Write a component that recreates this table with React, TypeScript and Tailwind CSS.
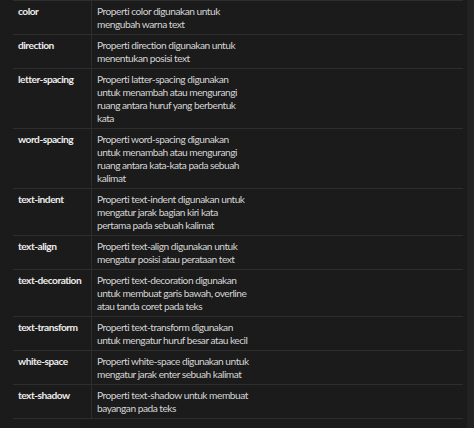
const rows: { name: string; lines: string[] }[] = [
  { name: 'color', lines: ['Properti color digunakan untuk', 'mengubah warna text'] },
  { name: 'direction', lines: ['Properti direction digunakan untuk', 'menentukan posisi text'] },
  {
    name: 'letter-spacing',
    lines: ['Properti latter-spacing digunakan', 'untuk menambah atau mengurangi', 'ruang antara huruf yang berbentuk', 'kata'],
  },
  {
    name: 'word-spacing',
    lines: ['Properti word-spacing digunakan', 'untuk menambah atau mengurangi', 'ruang antara kata-kata pada sebuah', 'kalimat'],
  },
  {
    name: 'text-indent',
    lines: ['Properti text-indent digunakan untuk', 'mengatur jarak bagian kiri kata', 'pertama pada sebuah kalimat'],
  },
  { name: 'text-align', lines: ['Properti text-align digunakan untuk', 'mengatur posisi atau perataan text'] },
  {
    name: 'text-decoration',
    lines: ['Properti text-decoration digunakan', 'untuk membuat garis bawah, overline', 'atau tanda coret pada teks'],
  },
  { name: 'text-transform', lines: ['Properti text-transform digunakan', 'untuk mengatur huruf besar atau kecil'] },
  { name: 'white-space', lines: ['Properti white-space digunakan untuk', 'mengatur jarak enter sebuah kalimat'] },
  { name: 'text-shadow', lines: ['Properti text-shadow untuk membuat', 'bayangan pada teks'] },
];

export default function App() {
  return (
    <div className="w-[474px] h-[428px] bg-[#1b1b1b] flex overflow-hidden font-['Lato',sans-serif] text-[10.2px] leading-[13px] tracking-[-0.5px]">
      <div className="flex-1 pl-[13px] pr-[4px]">
        {/* properties table */}
        <div className="border-b border-[#2e2e2e]">
          {rows.map((row) => (
            <div key={row.name} className="flex border-t border-[#2e2e2e]">
              <div className="w-[79px] shrink-0 border-r border-[#2e2e2e] pl-[5px] pt-[4px] pb-[3px] font-bold text-[#ececec] whitespace-nowrap">
                {row.name}
              </div>
              <div className="flex-1 pl-[5px] pt-[4px] pb-[3px] text-[#d4d4d4]">
                {row.lines.map((line) => (
                  <div key={line} className="whitespace-nowrap">
                    {line}
                  </div>
                ))}
              </div>
            </div>
          ))}
        </div>
      </div>
      <div className="w-[7px] bg-[#222222]" />
    </div>
  );
}
